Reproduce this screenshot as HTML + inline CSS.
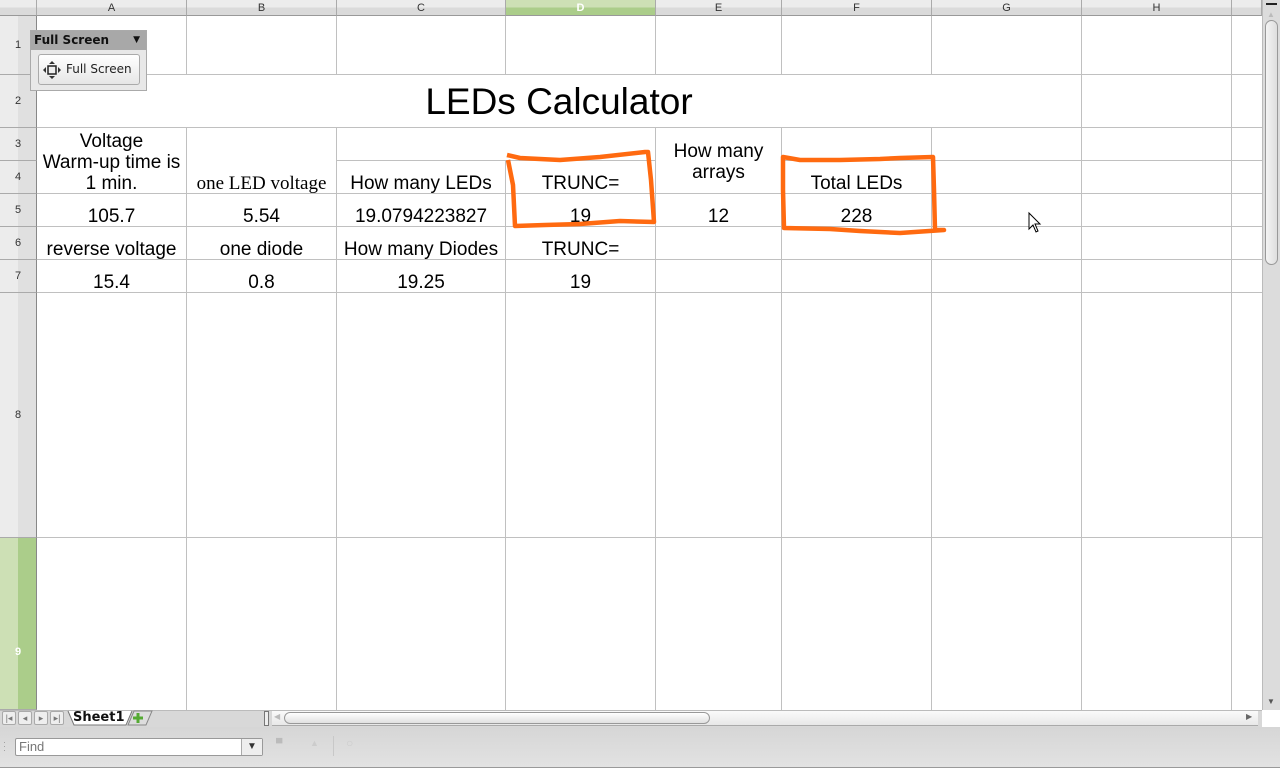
<!DOCTYPE html>
<html><head><meta charset="utf-8"><style>
*{margin:0;padding:0;box-sizing:border-box}
body{width:1280px;height:768px;overflow:hidden;background:#fff;position:relative;font-family:"Liberation Sans",sans-serif}
.a{position:absolute}
.ch{position:absolute;top:0;height:16px;background:linear-gradient(#ececec 0,#ececec 50%,#dadada 50%);border-right:1px solid #aaa;border-bottom:1px solid #999;font-size:11px;color:#333;text-align:center;line-height:16px}
.rh{position:absolute;left:0;width:37px;background:linear-gradient(90deg,#ececec 0,#ececec 50%,#e0e0e0 50%);border-right:1px solid #888;border-bottom:1px solid #aaa;font-size:11px;color:#333;text-align:center}
.vl{position:absolute;width:1px;background:#c0c0c0}
.hl{position:absolute;height:1px;background:#c0c0c0}
.t{position:absolute;font-size:19px;color:#000;text-align:center;white-space:nowrap;line-height:22px}
</style></head><body>
<div class="ch" style="left:0;width:37px"></div>
<div class="ch" style="left:37px;width:150px">A</div>
<div class="ch" style="left:187px;width:150px">B</div>
<div class="ch" style="left:337px;width:169px">C</div>
<div class="ch" style="left:506px;width:150px;background:linear-gradient(#cde0b5 0,#cde0b5 50%,#abcd8a 50%);color:#fff;font-weight:bold">D</div>
<div class="ch" style="left:656px;width:126px">E</div>
<div class="ch" style="left:782px;width:150px">F</div>
<div class="ch" style="left:932px;width:150px">G</div>
<div class="ch" style="left:1082px;width:150px">H</div>
<div class="ch" style="left:1232px;width:30px"></div>
<div class="rh" style="top:16px;height:59px;line-height:58px">1</div>
<div class="rh" style="top:75px;height:53px;line-height:52px">2</div>
<div class="rh" style="top:128px;height:33px;line-height:32px">3</div>
<div class="rh" style="top:161px;height:33px;line-height:32px">4</div>
<div class="rh" style="top:194px;height:33px;line-height:32px">5</div>
<div class="rh" style="top:227px;height:33px;line-height:32px">6</div>
<div class="rh" style="top:260px;height:33px;line-height:32px">7</div>
<div class="rh" style="top:293px;height:245px;line-height:244px">8</div>
<div class="rh" style="top:538px;height:172px;line-height:228px;background:linear-gradient(90deg,#cde0b5 0,#cde0b5 50%,#abcd8a 50%);color:#fff;font-weight:bold">9</div>
<div class="vl" style="left:186px;top:16px;height:58px"></div>
<div class="vl" style="left:336px;top:16px;height:58px"></div>
<div class="vl" style="left:505px;top:16px;height:58px"></div>
<div class="vl" style="left:655px;top:16px;height:58px"></div>
<div class="vl" style="left:781px;top:16px;height:58px"></div>
<div class="vl" style="left:931px;top:16px;height:58px"></div>
<div class="vl" style="left:1081px;top:16px;height:694px"></div>
<div class="vl" style="left:1231px;top:16px;height:694px"></div>
<div class="vl" style="left:186px;top:127px;height:583px"></div>
<div class="vl" style="left:336px;top:127px;height:583px"></div>
<div class="vl" style="left:505px;top:160px;height:550px"></div>
<div class="vl" style="left:655px;top:127px;height:583px"></div>
<div class="vl" style="left:781px;top:127px;height:583px"></div>
<div class="vl" style="left:931px;top:127px;height:583px"></div>
<div class="hl" style="left:37px;top:74px;width:1225px"></div>
<div class="hl" style="left:37px;top:127px;width:1225px"></div>
<div class="hl" style="left:336px;top:160px;width:320px"></div>
<div class="hl" style="left:781px;top:160px;width:481px"></div>
<div class="hl" style="left:37px;top:193px;width:1225px"></div>
<div class="hl" style="left:37px;top:226px;width:1225px"></div>
<div class="hl" style="left:37px;top:259px;width:1225px"></div>
<div class="hl" style="left:37px;top:292px;width:1225px"></div>
<div class="hl" style="left:37px;top:537px;width:1225px"></div>
<div class="t" style="left:37px;width:1044px;top:81px;font-size:37px;line-height:42px">LEDs Calculator</div>
<div class="t" style="left:37px;width:149px;top:131px;line-height:21px">Voltage<br>Warm-up time is<br>1 min.</div>
<div class="t" style="left:187px;width:149px;top:173px;font-family:'Liberation Serif',serif;font-size:19px">one LED voltage</div>
<div class="t" style="left:337px;width:168px;top:173px">How many LEDs</div>
<div class="t" style="left:506px;width:149px;top:173px">TRUNC=</div>
<div class="t" style="left:656px;width:125px;top:141px;line-height:21px">How many<br>arrays</div>
<div class="t" style="left:782px;width:149px;top:173px">Total LEDs</div>
<div class="t" style="left:37px;width:149px;top:206px">105.7</div>
<div class="t" style="left:187px;width:149px;top:206px">5.54</div>
<div class="t" style="left:337px;width:168px;top:206px">19.0794223827</div>
<div class="t" style="left:506px;width:149px;top:206px">19</div>
<div class="t" style="left:656px;width:125px;top:206px">12</div>
<div class="t" style="left:782px;width:149px;top:206px">228</div>
<div class="t" style="left:37px;width:149px;top:239px">reverse voltage</div>
<div class="t" style="left:187px;width:149px;top:239px">one diode</div>
<div class="t" style="left:337px;width:168px;top:239px">How many Diodes</div>
<div class="t" style="left:506px;width:149px;top:239px">TRUNC=</div>
<div class="t" style="left:37px;width:149px;top:272px">15.4</div>
<div class="t" style="left:187px;width:149px;top:272px">0.8</div>
<div class="t" style="left:337px;width:168px;top:272px">19.25</div>
<div class="t" style="left:506px;width:149px;top:272px">19</div>
<svg class="a" style="left:0;top:0" width="1280" height="768">
<path d="M507,155 L520,158 L560,160 L600,157 L645,152 L648,152 L651,180 L654,222 L620,221 L580,224 L545,225 L515,226 L513,185 L508,160" fill="none" stroke="#ff6a10" stroke-width="4.5" stroke-linejoin="round"/>
<path d="M783,157 L800,160 L840,160 L880,159 L900,158 L933,157 L934,190 L935,230 L944,230 L900,233 L860,231 L830,229 L784,228 L783,190 Z" fill="none" stroke="#ff6a10" stroke-width="4.5" stroke-linejoin="round"/>
<path d="M1029,213 L1029,229 L1033,225 L1036,232 L1038,231 L1035,224 L1040,224 Z" fill="#fff" stroke="#000" stroke-width="1"/>
</svg>
<div class="a" style="left:30px;top:30px;width:117px;height:61px;background:#e8e8e8;border:1px solid #aaa">
 <div style="height:19px;background:#a8a8a8;font-size:12px;font-weight:bold;padding-left:3px;line-height:19px;color:#111;font-family:'DejaVu Sans',sans-serif">Full Screen<span style="position:absolute;right:6px;top:0;font-size:9px">▼</span></div>
 <div style="position:absolute;left:7px;top:23px;width:102px;height:31px;border:1px solid #aaa;border-radius:3px;background:linear-gradient(#fff,#e6e6e6);font-size:12px;font-family:'DejaVu Sans',sans-serif;line-height:29px;padding-left:27px;color:#222">Full Screen
  <svg style="position:absolute;left:4px;top:6px" width="18" height="18"><rect x="5" y="5" width="8" height="8" fill="#eee" stroke="#222" stroke-width="1.5"/><path d="M9,0 L6,3 L12,3Z M9,18 L6,15 L12,15Z M0,9 L3,6 L3,12Z M18,9 L15,6 L15,12Z" fill="#333"/></svg>
 </div>
</div>
<div class="a" style="left:1262px;top:0;width:18px;height:710px;background:#dcdcdc;border-left:1px solid #bbb">
 <div style="position:absolute;left:3px;top:3px;width:11px;height:2px;background:#222"></div>
 <div style="position:absolute;left:4px;top:10px;font-size:8px;color:#bbb">▲</div>
 <div style="position:absolute;left:2px;top:20px;width:13px;height:245px;border:1px solid #999;border-radius:7px;background:linear-gradient(90deg,#f4f4f4,#dedede)"></div>
 <div style="position:absolute;left:4px;top:697px;font-size:8px;color:#555">▼</div>
</div>
<div class="a" style="left:0;top:710px;width:1262px;height:17px;background:#d8d8d8;border-top:1px solid #bbb"></div>
<div class="a" style="left:2px;top:711px;font-size:9px;color:#777;display:flex;gap:2px">
<span style="display:inline-block;width:14px;height:14px;border:1px solid #aaa;border-radius:2px;background:#eee;text-align:center;line-height:12px">|◂</span><span style="display:inline-block;width:14px;height:14px;border:1px solid #aaa;border-radius:2px;background:#eee;text-align:center;line-height:12px">◂</span><span style="display:inline-block;width:14px;height:14px;border:1px solid #aaa;border-radius:2px;background:#eee;text-align:center;line-height:12px">▸</span><span style="display:inline-block;width:14px;height:14px;border:1px solid #aaa;border-radius:2px;background:#eee;text-align:center;line-height:12px">▸|</span></div>
<svg class="a" style="left:64px;top:710px" width="100" height="17"><path d="M4,1 L10,15 L62,15 L68,1" fill="#fff" stroke="#777"/><path d="M64,15 L70,1 L88,1 L82,15Z" fill="#ddd" stroke="#888"/><path d="M69,8 h10 M74,3 v10" stroke="#5a3" stroke-width="3"/></svg>
<div class="a" style="left:73px;top:710px;font-size:13px;font-weight:bold;font-family:'DejaVu Sans',sans-serif;color:#111">Sheet1</div>
<div class="a" style="left:264px;top:711px;width:5px;height:15px;border:1px solid #777;background:#eee"></div>
<div class="a" style="left:272px;top:711px;width:986px;height:15px;background:linear-gradient(#fafafa,#e8e8e8);border-bottom:1px solid #aaa"></div>
<div class="a" style="left:284px;top:712px;width:426px;height:12px;border:1px solid #999;border-radius:6px;background:linear-gradient(#fff,#e0e0e0)"></div>
<div class="a" style="left:274px;top:712px;font-size:8px;color:#bbb">◀</div>
<div class="a" style="left:1246px;top:712px;font-size:8px;color:#666">▶</div>
<div class="a" style="left:0;top:727px;width:1280px;height:41px;background:linear-gradient(#d6d6d6,#e2e2e2);border-bottom:1px solid #999"></div>
<div class="a" style="left:3px;top:740px;font-size:9px;color:#999;line-height:4px">·<br>·<br>·</div>
<div class="a" style="left:15px;top:738px;width:248px;height:18px;border:1px solid #999;border-radius:2px;background:#fff;font-size:13px;color:#777;padding-left:3px;line-height:16px">Find</div>
<div class="a" style="left:241px;top:739px;width:21px;height:16px;border-left:1px solid #aaa;background:#eee;font-size:10px;text-align:center;line-height:16px;color:#333">▼</div>
<div class="a" style="left:276px;top:738px;font-size:9px;color:#bbb">▀</div>
<div class="a" style="left:310px;top:738px;font-size:9px;color:#ccc">▲</div>
<div class="a" style="left:333px;top:736px;width:1px;height:20px;background:#c8c8c8"></div>
<div class="a" style="left:346px;top:736px;font-size:12px;color:#ccc">○</div>
</body></html>
